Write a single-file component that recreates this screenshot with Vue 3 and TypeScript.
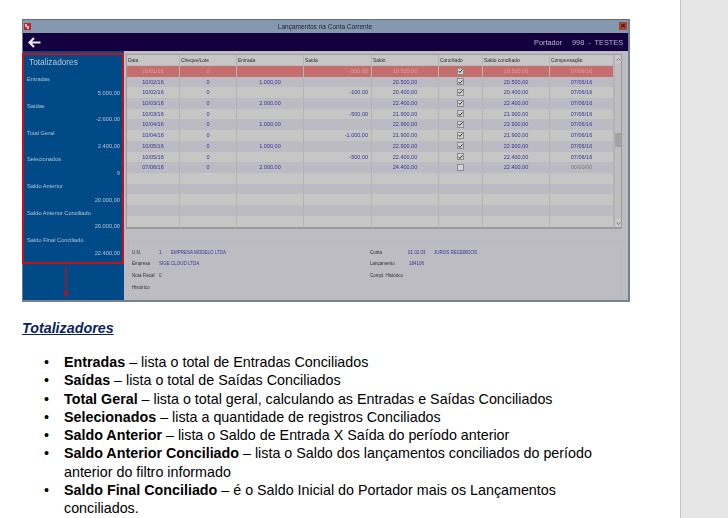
<script setup lang="ts">
interface Row { d: string; c: string; e: string; s: string; sa: string; k: boolean; sc: string; co: string }
const totals = [
  ['Entradas', '5.000,00'], ['Saídas', '-2.600,00'], ['Total Geral', '2.400,00'], ['Selecionados', '9'],
  ['Saldo Anterior', '20.000,00'], ['Saldo Anterior Conciliado', '20.000,00'], ['Saldo Final Conciliado', '22.400,00'],
]
const rows: Row[] = [
  { d: '10/01/16', c: '0', e: '', s: '-500,00', sa: '19.500,00', k: true, sc: '19.500,00', co: '07/06/16' },
  { d: '10/02/16', c: '0', e: '1.000,00', s: '', sa: '20.500,00', k: true, sc: '20.500,00', co: '07/06/16' },
  { d: '10/02/16', c: '0', e: '', s: '-100,00', sa: '20.400,00', k: true, sc: '20.400,00', co: '07/06/16' },
  { d: '10/03/16', c: '0', e: '2.000,00', s: '', sa: '22.400,00', k: true, sc: '22.400,00', co: '07/06/16' },
  { d: '10/03/16', c: '0', e: '', s: '-500,00', sa: '21.900,00', k: true, sc: '21.900,00', co: '07/06/16' },
  { d: '10/04/16', c: '0', e: '1.000,00', s: '', sa: '22.900,00', k: true, sc: '22.900,00', co: '07/06/16' },
  { d: '10/04/16', c: '0', e: '', s: '-1.000,00', sa: '21.900,00', k: true, sc: '21.900,00', co: '07/06/16' },
  { d: '10/05/16', c: '0', e: '1.000,00', s: '', sa: '22.900,00', k: true, sc: '22.900,00', co: '07/06/16' },
  { d: '10/05/16', c: '0', e: '', s: '-500,00', sa: '22.400,00', k: true, sc: '22.400,00', co: '07/06/16' },
  { d: '07/06/16', c: '0', e: '2.000,00', s: '', sa: '24.400,00', k: false, sc: '22.400,00', co: '00/00/00' },
]
const emptyRows = 5
const heads = ['Data', 'Cheque/Lote', 'Entrada', 'Saída', 'Saldo', 'Conciliado', 'Saldo conciliado', 'Compensação']
const items = [
  ['Entradas', ' – lista o total de Entradas Conciliados'],
  ['Saídas', ' – lista o total de Saídas Conciliados'],
  ['Total Geral', ' – lista o total geral, calculando as Entradas e Saídas Conciliados'],
  ['Selecionados', ' – lista a quantidade de registros Conciliados'],
  ['Saldo Anterior', ' – lista o Saldo de Entrada X Saída do período anterior'],
  ['Saldo Anterior Conciliado', ' – lista o Saldo dos lançamentos conciliados do período anterior do filtro informado'],
  ['Saldo Final Conciliado', ' – é o Saldo Inicial do Portador mais os Lançamentos conciliados.'],
]
</script>

<template>
  <div class="page">
    <main class="doc">
      <div class="window">
        <div class="titlebar">
          <span class="appicon"><svg width="7" height="7" viewBox="0 0 7 7"><path d="M1 1h2v2h2v3H3V4H1z" fill="#e9b9bb"/></svg></span>
          <span class="wtitle">Lançamentos na Conta Corrente</span>
          <span class="close">×</span>
        </div>
        <div class="navbar">
          <svg class="back" width="13" height="11" viewBox="0 0 13 11"><path d="M6 1 1.500 5.500 6 10M2 5.500h10.500" fill="none" stroke="#e8e8ee" stroke-width="2.200"/></svg>
          <span class="portador"><span>Portador</span><span>998 &nbsp;-&nbsp; TESTES</span></span>
        </div>
        <div class="body">
          <aside class="side">
            <div class="stitle">Totalizadores</div>
            <div v-for="t in totals" :key="t[0]" class="total">
              <div class="tlabel">{{ t[0] }}</div>
              <div class="tvalue">{{ t[1] }}</div>
            </div>
          </aside>
          <section class="content">
            <div class="grid">
              <div class="tablecol">
                <div class="row head">
                  <span v-for="h in heads" :key="h" class="cell">{{ h }}</span>
                </div>
                <div v-for="(r, i) in rows" :key="i" class="row" :class="{ sel: i === 0, shade: i % 2 === 1, plain: i % 2 === 0 }">
                  <span class="cell mid">{{ r.d }}</span>
                  <span class="cell mid">{{ r.c }}</span>
                  <span class="cell mid">{{ r.e }}</span>
                  <span class="cell end">{{ r.s }}</span>
                  <span class="cell mid">{{ r.sa }}</span>
                  <span class="cell mid"><span class="check" :class="{ on: r.k }"><svg v-if="r.k" width="7" height="6" viewBox="0 0 7 6"><path d="M.8 3 2.600 5 6.300.8" fill="none" stroke="#222" stroke-width="1.300"/></svg></span></span>
                  <span class="cell mid">{{ r.sc }}</span>
                  <span class="cell mid" :class="{ grey: !r.k }">{{ r.co }}</span>
                </div>
                <div v-for="n in emptyRows" :key="'e' + n" class="row" :class="n % 2 === 1 ? 'plain' : 'shade'">
                  <span v-for="h in heads" :key="h" class="cell"></span>
                </div>
              </div>
              <div class="scroll">
                <span class="sbtn"><svg width="5" height="3" viewBox="0 0 5 3"><path d="M.5 2.500 2.500.5l2 2" fill="none" stroke="#777"/></svg></span>
                <span class="thumb"></span>
                <span class="sbtn"><svg width="5" height="3" viewBox="0 0 5 3"><path d="M.5.500l2 2 2-2" fill="none" stroke="#777"/></svg></span>
              </div>
            </div>
            <div class="details">
              <div class="dcol">
                <div class="dline"><span class="dl w27">U.N.</span><span class="dv un">1</span><span class="dv">EMPRESA MODELO LTDA</span></div>
                <div class="dline"><span class="dl w27">Empresa</span><span class="dv">SIGE CLOUD LTDA</span></div>
                <div class="dline"><span class="dl w27">Nota Fiscal</span><span class="dv">0</span></div>
                <div class="dline"><span class="dl">Histórico</span></div>
              </div>
              <div class="dcol right">
                <div class="dline"><span class="dl w38">Conta</span><span class="dv un2">01.02.03</span><span class="dv">JUROS RECEBIDOS</span></div>
                <div class="dline"><span class="dl w39">Lançamento</span><span class="dv">184106</span></div>
                <div class="dline"><span class="dl">Compl. Histórico</span></div>
              </div>
            </div>
          </section>
        </div>
      </div>
      <div class="redbox"></div>
      <svg class="arrow" width="6" height="32" viewBox="0 0 6 32"><path d="M3 0v26" stroke="#b5121b" stroke-width="1.500"/><path d="M.5 25h5L3 31z" fill="#b5121b"/></svg>

      <h2 class="heading">Totalizadores</h2>
      <ul class="list">
        <li v-for="it in items" :key="it[0]"><b>{{ it[0] }}</b>{{ it[1] }}</li>
      </ul>
    </main>
    <div class="rail"></div>
  </div>
</template>

<style scoped>
.page { width: 728px; height: 518px; display: flex; overflow: hidden; background: #fff; font-family: "Liberation Sans", Arial, sans-serif; }
.doc { position: relative; width: 680px; padding: 19px 0 0 22px; box-sizing: border-box; }
.rail { width: 48px; background: #e6e6e6; border-left: 1px solid #c8c8c8; box-sizing: border-box; }

.window { width: 608px; height: 283px; box-sizing: border-box; border: 1px solid #6f7b8b; border-top-color: #6a6a70; border-bottom: 2px solid #76808e; border-right: 2px solid #6f7f95; background: #bdbcc2; display: flex; flex-direction: column; filter: blur(0.4px); font-family: "Liberation Sans", sans-serif; }
.titlebar { height: 12px; background: #8499b0; display: flex; align-items: center; padding: 0 1px; border-bottom: 1px solid #8a97a8; }
.appicon { width: 7px; height: 7px; background: #b22b33; display: block; }
.appicon svg { display: block; }
.wtitle { flex: 1; text-align: center; font-size: 6.500px; color: #23262c; }
.close { width: 8px; height: 8px; background: #a9432f; color: #111; font: bold 8px/8px "Liberation Sans", sans-serif; text-align: center; }
.navbar { height: 18px; background: #15003f; display: flex; align-items: center; justify-content: space-between; padding: 0 5px; }
.back { display: block; }
.portador { display: flex; gap: 10px; font-size: 7.300px; color: #b6b8c6; }
.body { flex: 1; display: flex; min-height: 0; }
.side { width: 101px; background: #004a87; color: #b4c3d2; padding: 5px 4px 0 4px; box-sizing: border-box; font-size: 5.700px; }
.stitle { font-size: 8.300px; color: #b7c7d6; height: 13px; line-height: 13px; padding: 0 0 1px 2px; margin-bottom: 3px; }
.total { height: 26.750px; }
.tlabel { height: 13.500px; line-height: 13px; }
.tvalue { text-align: right; line-height: 13px; }
.content { flex: 1; min-width: 0; padding: 3px 6px 0 2px; display: flex; flex-direction: column; }
.grid { display: flex; height: 175px; flex: none; border: 1px solid #9b9ba0; border-bottom: 2px solid #9c9ca0; box-sizing: border-box; background: #c6c6c4; }
.tablecol { width: 487px; display: flex; flex-direction: column; }
.row { display: grid; grid-template-columns: 53px 57px 67px 68px 67px 44px 67px 64px; height: 10.700px; flex: none; font-size: 5.500px; line-height: 10px; color: #35339a; }
.row.head { height: 11px; background: #c6c6c6; color: #2b2b2f; border-bottom: 1px solid #bbb; box-sizing: border-box; line-height: 11px; font-size: 4.900px; }
.head .cell { padding-left: 1px; }
.row.shade { background: #bcbbc3; }
.row.plain { background: #c6c6c4; }
.row.sel { background: #c66e6e; color: #d9a0a4; }
.cell { border-right: 1px solid #b4b4b6; box-sizing: border-box; display: block; overflow: hidden; white-space: nowrap; min-width: 0; }
.mid { text-align: center; }
.end { text-align: right; padding-right: 3px; }
.grey { color: #77777f; }
.check { display: inline-flex; align-items: center; justify-content: center; width: 5px; height: 5px; border: 1px solid #8c8c90; background: #d4d4d4; vertical-align: middle; margin-top: -1px; }
.scroll { flex: 1; background: #bfbfbf; display: flex; flex-direction: column; align-items: center; justify-content: space-between; position: relative; border-left: 1px solid #b4b4b6; }
.sbtn { width: 100%; height: 8px; display: flex; align-items: center; justify-content: center; background: #c9c9c9; }
.thumb { position: absolute; top: 78px; left: 0; right: 0; height: 14px; background: #a3a3a6; }
.details { margin: 11px 0 0 2px; height: 57px; flex: none; display: flex; border: 1px solid #b6b9bf; border-radius: 2px; font-size: 4.500px; }
.dcol { width: 241px; flex: none; padding: 5.500px 0 0 3px; box-sizing: border-box; }
.dcol.right { padding-left: 0; }
.dline { height: 11.700px; line-height: 11.700px; display: flex; color: #2c2c32; white-space: nowrap; }
.dl { display: block; }
.dv { color: #35339a; }
.w27 { width: 27px; }
.w38 { width: 38px; }
.w39 { width: 39px; }
.un { width: 12px; }
.un2 { width: 26px; }

.redbox { position: absolute; left: 22px; top: 53px; width: 102px; height: 211px; box-sizing: border-box; border: 2px solid #c4121c; }
.arrow { position: absolute; left: 63px; top: 267px; }

.heading { margin: 18px 0 0 0; font-size: 14.300px; line-height: 17px; font-weight: bold; font-style: italic; text-decoration: underline; color: #0b2460; }
.list { list-style: none; margin: 16px 0 0 0; padding: 0 0 0 42px; width: 600px; box-sizing: border-box; font-size: 14.300px; line-height: 18.300px; color: #000; }
.list li::before { content: "•"; display: inline-block; width: 19px; margin-left: -19px; position: relative; left: -1px; }
.list b { font-weight: bold; }
</style>

<style>
html, body { margin: 0; background: #fff; }
</style>
